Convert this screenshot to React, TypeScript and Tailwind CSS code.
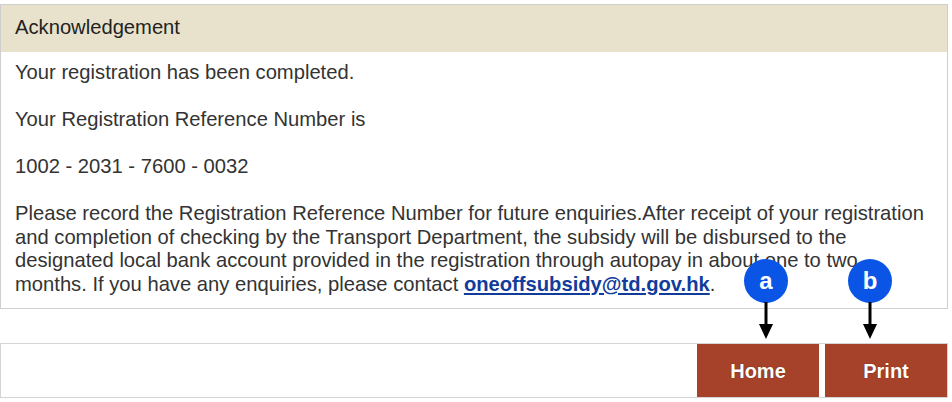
import React from "react";

function Callout({ letter, left }: { letter: string; left: string }) {
  return (
    <div className={`absolute top-[259px] ${left} flex w-[44px] flex-col items-center`}>
      <div className="flex h-[44px] w-[44px] items-center justify-center rounded-full bg-[#0a55e6] text-[24px] font-bold leading-none text-white">
        {letter}
      </div>
      <svg width="20" height="38" viewBox="0 0 20 38" className="-mt-[1px]">
        <line x1="10" y1="0" x2="10" y2="26" stroke="#000" strokeWidth="3" />
        <polygon points="3,22 17,22 10,37" fill="#000" />
      </svg>
    </div>
  );
}

export default function App() {
  return (
    <div
      className="relative h-[402px] w-[952px] bg-white pt-[4px] text-[#333]"
      style={{ fontFamily: '"Liberation Sans", Arial, sans-serif' }}
    >
      <div className="w-[948px] border border-[#cfcfcf]">
        <div className="flex h-[47px] items-center bg-[#e8e2cc] px-[14px] pb-[3px] text-[20.2px] text-[#222]">
          Acknowledgement
        </div>
        <div className="whitespace-nowrap bg-white pl-[14px] pr-[4px] pb-[12px] pt-[9px] text-[20.2px] leading-[23.5px]">
          Your registration has been completed.
          <br />
          <br />
          Your Registration Reference Number is
          <br />
          <br />
          1002 - 2031 - 7600 - 0032
          <br />
          <br />
          Please record the Registration Reference Number for future enquiries.After receipt of your registration
          <br />
          and completion of checking by the Transport Department, the subsidy will be disbursed to the
          <br />
          designated local bank account provided in the registration through autopay in about one to two
          <br />
          months. If you have any enquiries, please contact{" "}
          <a href="#" className="font-bold text-[#123c9c] underline">
            oneoffsubsidy@td.gov.hk
          </a>
          .
        </div>
      </div>
      <div className="mt-[34px] flex h-[55px] w-[948px] justify-end gap-[6px] border border-[#d4d4d4]">
        <button className="w-[122px] bg-[#a6412a] text-[20px] font-bold text-white [text-shadow:0_0_1px_#5a1a0a]">
          Home
        </button>
        <button className="w-[122px] bg-[#a6412a] text-[20px] font-bold text-white [text-shadow:0_0_1px_#5a1a0a]">
          Print
        </button>
      </div>
      <Callout letter="a" left="left-[744px]" />
      <Callout letter="b" left="left-[848px]" />
    </div>
  );
}
